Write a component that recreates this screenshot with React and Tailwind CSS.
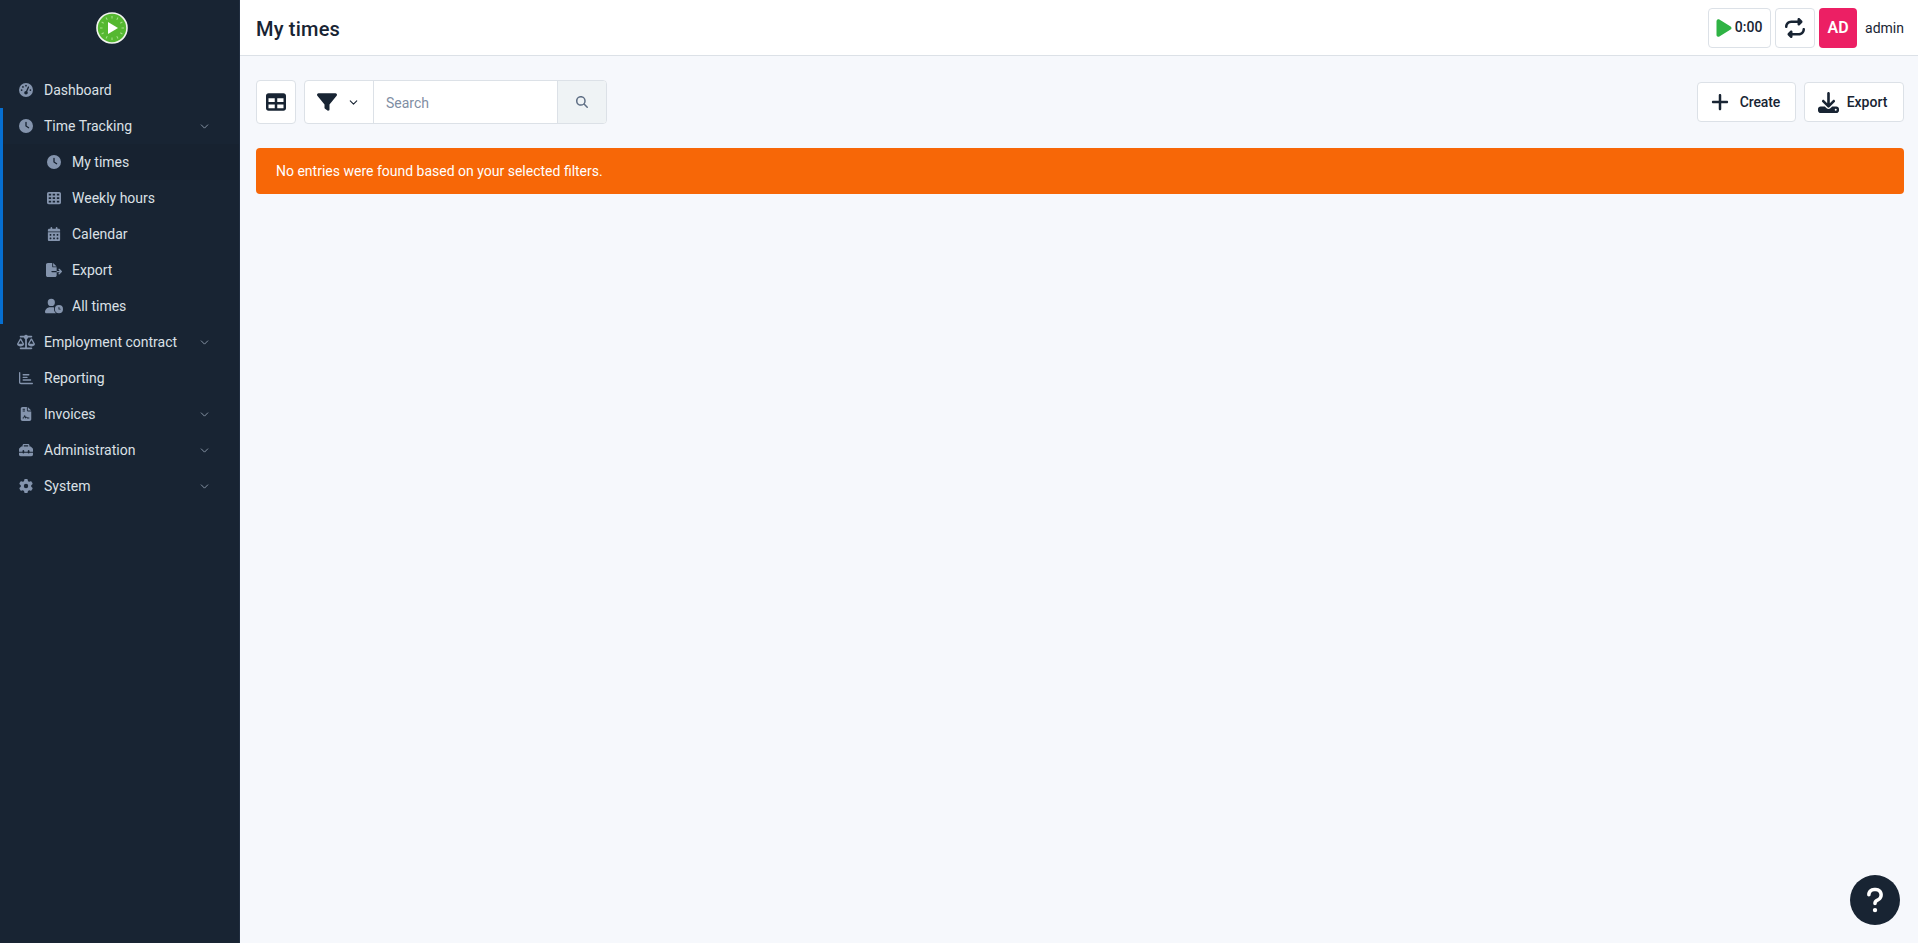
import React from "react";
import { ChevronDown } from "lucide-react";
import {
  FaGaugeHigh, FaClock, FaTableCells, FaCalendarDays, FaFileExport, FaUserClock, FaScaleBalanced,
  FaRegChartBar, FaFileContract, FaToolbox, FaGear, FaFilter, FaMagnifyingGlass, FaPlus, FaDownload, FaPlay, FaQuestion,
  FaTable, FaRepeat,
} from "react-icons/fa6";

function Logo() {
  const ticks = [];
  for (let i = 0; i < 12; i++) {
    ticks.push(<rect key={i} x="15.5" y="4" width="1" height="2.5" fill="#a6e08a" transform={`rotate(${i * 30} 16 16)`} />);
  }
  return (
    <svg width="32" height="32" viewBox="0 0 32 32">
      <circle cx="16" cy="16" r="15" fill="#55b831" stroke="#f2f5f0" strokeWidth="1.6" />
      {ticks}
      <path d="M12 10 L22 16 L12 22 Z" fill="#fff" />
    </svg>
  );
}

function Item({ icon: Icon, label, chevron, sub, active, inner, size = 14 }) {
  const pad = sub ? "w-[69px] pl-[42px]" : inner ? "w-[41px] pl-[14px]" : "w-[44px] pl-[17px]";
  return (
    <div className={`h-9 flex items-center ${active ? "bg-[#172230]" : ""}`}>
      <div className={`${pad} shrink-0 flex items-center`}>
        <span className="w-[18px] flex justify-center text-[#8494ad]">
          <Icon size={size} />
        </span>
      </div>
      <span className="text-[14px] text-[#dbe0e6] leading-5">{label}</span>
      {chevron && (
        <ChevronDown size={13} className="ml-auto mr-[28px] text-[#8a97a8]" strokeWidth={1.75} />
      )}
    </div>
  );
}

export default function App() {
  return (
    <div className="flex h-screen overflow-hidden bg-[#f6f8fc] text-[#182433] font-['Roboto',sans-serif]">
      <aside className="w-[240px] shrink-0 bg-[#182433] border-r border-[#212e40] flex flex-col">
        <div className="h-[56px] pt-3 pr-4 flex justify-center">
          <Logo />
        </div>
        <nav className="pt-4">
          <Item icon={FaGaugeHigh} label="Dashboard" />
          <div className="border-l-[3px] border-[#066fd1]">
            <Item icon={FaClock} label="Time Tracking" chevron inner />
            <Item icon={FaClock} label="My times" sub active />
            <Item icon={FaTableCells} label="Weekly hours" sub />
            <Item icon={FaCalendarDays} label="Calendar" sub />
            <Item icon={FaFileExport} label="Export" sub size={16} />
            <Item icon={FaUserClock} label="All times" sub size={18} />
          </div>
          <Item icon={FaScaleBalanced} label="Employment contract" chevron size={18} />
          <Item icon={FaRegChartBar} label="Reporting" />
          <Item icon={FaFileContract} label="Invoices" chevron />
          <Item icon={FaToolbox} label="Administration" chevron />
          <Item icon={FaGear} label="System" chevron />
        </nav>
      </aside>

      <div className="flex-1 flex flex-col min-w-0">
        <header className="h-[56px] shrink-0 bg-white border-b border-[#dce1e7] pl-4 pr-[14px] flex items-center">
          <h1 className="text-[20px] leading-7 font-medium mt-[2px] tracking-[0.01em]">My times</h1>
          <div className="ml-auto flex items-center">
            <button className="h-10 w-[63px] bg-white border border-[#dce1e7] rounded flex items-center justify-center gap-[1px] pr-[3px] text-[14px] font-medium">
              <FaPlay size={20} className="text-[#2fb344]" />
              <span>0:00</span>
            </button>
            <button className="ml-1 h-10 w-10 bg-white border border-[#dce1e7] rounded flex items-center justify-center">
              <FaRepeat size={20} />
            </button>
            <div className="ml-1 h-10 w-[38px] bg-[#ec1f64] rounded flex items-center justify-center text-white text-[16px] font-semibold">AD</div>
            <span className="ml-2 mt-[2px] text-[14px]">admin</span>
          </div>
        </header>

        <main className="pl-4 pr-[14px] pt-6">
          <div className="flex items-center h-11">
            <button className="h-11 w-10 bg-white border border-[#dce1e7] rounded flex items-center justify-center">
              <FaTable size={20} />
            </button>
            <div className="ml-2 h-11 w-[303px] bg-white border border-[#dce1e7] rounded flex overflow-hidden">
              <div className="w-[69px] shrink-0 border-r border-[#dce1e7] flex items-center pl-[12px]">
                <FaFilter size={20} />
                <ChevronDown size={13} strokeWidth={2} className="ml-[10px]" />
              </div>
              <div className="flex-1 flex items-center pl-3 pt-[2px] text-[14px] text-[#7f8ea3]">Search</div>
              <div className="w-[49px] shrink-0 bg-[#eff3f5] border-l border-[#dce1e7] flex items-center justify-center text-[#5f6f85]">
                <FaMagnifyingGlass size={12} />
              </div>
            </div>
            <div className="ml-auto flex items-center gap-2">
              <button className="h-10 w-[99px] bg-white border border-[#dce1e7] rounded flex items-center justify-center gap-[10px] pr-[3px] text-[14px] font-medium tracking-[-0.01em]">
                <FaPlus size={20} />
                <span>Create</span>
              </button>
              <button className="h-10 w-[100px] bg-white border border-[#dce1e7] rounded flex items-center justify-center gap-[8px] pr-[3px] text-[14px] font-medium">
                <FaDownload size={21} />
                <span>Export</span>
              </button>
            </div>
          </div>
          <div className="mt-6 h-[46px] bg-[#f76707] rounded flex items-center px-5 text-[14px] text-white">
            No entries were found based on your selected filters.
          </div>
        </main>
      </div>

      <div className="fixed right-[18px] bottom-[18px] w-[50px] h-[50px] rounded-full bg-[#182433] flex items-center justify-center text-white">
        <FaQuestion size={28} />
      </div>
    </div>
  );
}
